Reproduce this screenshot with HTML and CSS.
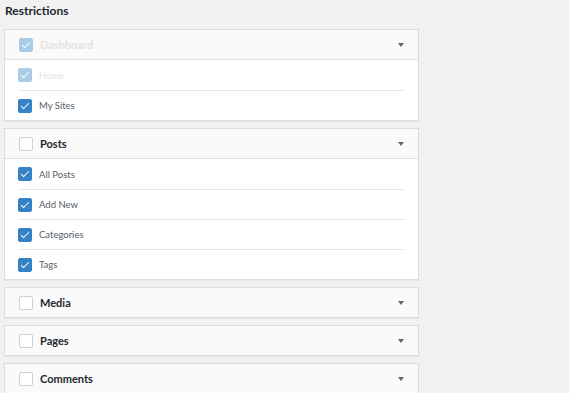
FILE: index.html
```html
<!DOCTYPE html>
<html lang="en">
<head>
    <meta charset="UTF-8">
    <meta name="viewport" content="width=device-width, initial-scale=1.0">
    <title>Restrictions</title>
    <link rel="stylesheet" href="styles.css">
</head>
<body>
    <h3 class="title">Restrictions</h3>

    <!-- Dashboard (disabled) -->
    <div class="panel">
        <div class="panel-head disabled">
            <span class="check checked"></span>
            <span class="head-label">Dashboard</span>
            <span class="arrow"></span>
        </div>
        <ul class="items">
            <li class="item disabled"><span class="check checked"></span><span class="item-label">Home</span></li>
            <li class="item"><span class="check checked"></span><span class="item-label">My Sites</span></li>
        </ul>
    </div>

    <!-- Posts -->
    <div class="panel">
        <div class="panel-head">
            <span class="check"></span>
            <span class="head-label">Posts</span>
            <span class="arrow"></span>
        </div>
        <ul class="items">
            <li class="item"><span class="check checked"></span><span class="item-label">All Posts</span></li>
            <li class="item"><span class="check checked"></span><span class="item-label">Add New</span></li>
            <li class="item"><span class="check checked"></span><span class="item-label">Categories</span></li>
            <li class="item"><span class="check checked"></span><span class="item-label">Tags</span></li>
        </ul>
    </div>

    <div class="panel">
        <div class="panel-head">
            <span class="check"></span>
            <span class="head-label">Media</span>
            <span class="arrow"></span>
        </div>
    </div>

    <div class="panel">
        <div class="panel-head">
            <span class="check"></span>
            <span class="head-label">Pages</span>
            <span class="arrow"></span>
        </div>
    </div>

    <div class="panel">
        <div class="panel-head">
            <span class="check"></span>
            <span class="head-label">Comments</span>
            <span class="arrow"></span>
        </div>
    </div>
</body>
</html>
```

FILE: styles.css
```css
body {
    margin: 0;
    padding: 0 0 0 4px;
    background-color: #f1f1f1;
    font-family: Lato, "Open Sans", sans-serif;
    color: #32373c;
}

.title {
    margin: 0;
    padding: 3px 0 0 1px;
    height: 26px;
    font-size: 12px;
    font-weight: 700;
    color: #23282d;
}

.panel {
    width: 413px;
    margin-bottom: 7px;
    background-color: #fff;
    border: 1px solid #dcdcdc;
    box-shadow: 0 1px 1px rgba(0, 0, 0, 0.04);
}

.panel-head {
    display: flex;
    align-items: center;
    height: 29px;
    padding: 0 14px;
    background-color: #fafafa;
}

.panel-head .head-label {
    flex: 1;
    font-size: 11px;
    font-weight: 700;
    color: #23282d;
}

.panel-head.disabled .head-label {
    color: #e3e3e3;
}

.arrow {
    width: 0;
    height: 0;
    border-left: 3px solid transparent;
    border-right: 3px solid transparent;
    border-top: 4px solid #666;
}

.items {
    list-style: none;
    margin: 0;
    padding: 0 13px;
    border-top: 1px solid #e1e1e1;
}

.item {
    display: flex;
    align-items: center;
    box-sizing: border-box;
    height: 30px;
    border-top: 1px solid #e8e8e8;
}

.item:first-child {
    border-top: none;
}

.item-label {
    font-size: 9.5px;
    color: #555d66;
}

.item.disabled .item-label {
    color: #e3e3e3;
}

.check {
    position: relative;
    box-sizing: border-box;
    width: 14px;
    height: 14px;
    margin-right: 7px;
    border: 1px solid #d0d0d0;
    border-radius: 2px;
    background-color: #fff;
}

.check.checked {
    border-color: #3582c4;
    background-color: #3582c4;
}

.check.checked::after {
    content: "";
    position: absolute;
    left: 4px;
    top: 1px;
    width: 3px;
    height: 7px;
    border: solid #fff;
    border-width: 0 1.5px 1.5px 0;
    transform: rotate(45deg);
}

.disabled .check.checked {
    border-color: #a9cbe6;
    background-color: #a9cbe6;
}
```
